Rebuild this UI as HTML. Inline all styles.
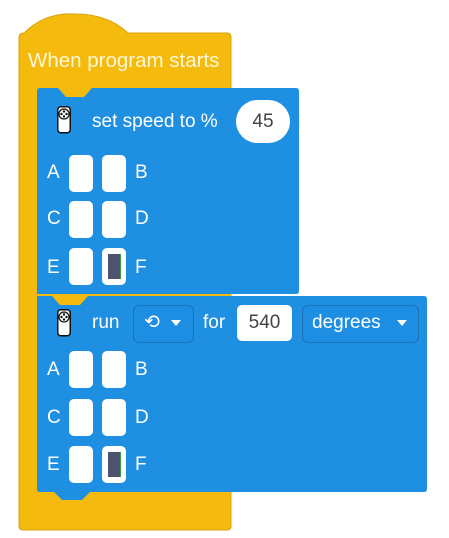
<!DOCTYPE html>
<html><head><style>
body{margin:0;width:449px;height:538px;background:#fff;position:relative;overflow:hidden;font-family:"Liberation Sans",sans-serif}
.a{position:absolute}
.t{position:absolute;color:#fff;font-size:19px;line-height:20px}
.box{position:absolute;width:24px;height:37px;background:#fff;border-radius:5px}
.dk{position:absolute;left:6px;top:6px;width:12px;height:25px;background:#4d5470;border-right:1px solid #3a9a4a}
.dd{position:absolute;border:1px solid #1a72b8;border-radius:6px;background:#1e8ee2}
</style></head><body>
<svg class="a" style="left:0;top:0" width="449" height="538">
<path d="M19 38 Q19 33 24 33 Q45 12 75 14 Q108 14 128 33 L227 33 Q231 33 231 37 L231 526 Q231 530 227 530 L23 530 Q19 530 19 526 Z" fill="#f4bb0e" stroke="#d9a30a" stroke-width="1"/>
<path d="M37 91 Q37 88 40 88 L58 88 L66 97 L84 97 L92 88 L296 88 Q299 88 299 91 L299 291 Q299 294 296 294 L37 294 Z" fill="#1f8fe1"/>
<path d="M37 296 L52 296 L60 305 L80 305 L88 296 L424 296 Q427 296 427 299 L427 489 Q427 492 424 492 L90 492 L82 500 L62 500 L54 492 L40 492 Q37 492 37 489 Z" fill="#1f8fe1"/>
<g id="ic1" transform="translate(57,106)">
<rect x="0.75" y="0.75" width="12.5" height="26" rx="3" fill="#fff" stroke="#111" stroke-width="1.5"/>
<circle cx="7" cy="8" r="5" fill="#fff" stroke="#111" stroke-width="1.2"/>
<circle cx="7" cy="5.5" r="1.2" fill="#111"/><circle cx="7" cy="10.5" r="1.2" fill="#111"/><circle cx="4.5" cy="8" r="1.2" fill="#111"/><circle cx="9.5" cy="8" r="1.2" fill="#111"/>
</g>
<use href="#ic1" transform="translate(0,203)"/>
</svg>
<div class="t" style="left:28px;top:51px;color:#fff6d6;font-size:20.5px">When program starts</div>

<div class="t" style="left:92px;top:112px">set speed to %</div>
<div class="a" style="left:236px;top:100px;width:54px;height:43px;background:#fff;border-radius:22px;font-size:19px;color:#444;text-align:center;line-height:43px">45</div>

<div class="t" style="left:47px;top:163px">A</div><div class="box" style="left:69px;top:155px"></div><div class="box" style="left:102px;top:155px"></div><div class="t" style="left:135px;top:163px">B</div>
<div class="t" style="left:47px;top:209px">C</div><div class="box" style="left:69px;top:201px"></div><div class="box" style="left:102px;top:201px"></div><div class="t" style="left:135px;top:209px">D</div>
<div class="t" style="left:47px;top:258px">E</div><div class="box" style="left:69px;top:248px"></div><div class="box" style="left:102px;top:248px"><div class="dk"></div></div><div class="t" style="left:135px;top:258px">F</div>

<div class="t" style="left:92px;top:313px">run</div>
<div class="dd" style="left:133px;top:305px;width:59px;height:36px"></div>
<div class="t" style="left:144px;top:313px">⟲</div>
<div class="a" style="left:171px;top:320px;width:0;height:0;border-left:5px solid transparent;border-right:5px solid transparent;border-top:6px solid #fff"></div>
<div class="t" style="left:203px;top:313px">for</div>
<div class="a" style="left:237px;top:305px;width:55px;height:36px;background:#fff;border-radius:5px;font-size:19px;color:#444;text-align:center;line-height:36px">540</div>
<div class="dd" style="left:302px;top:305px;width:115px;height:36px"></div>
<div class="t" style="left:312px;top:313px">degrees</div>
<div class="a" style="left:397px;top:320px;width:0;height:0;border-left:5px solid transparent;border-right:5px solid transparent;border-top:6px solid #fff"></div>

<div class="t" style="left:47px;top:360px">A</div><div class="box" style="left:69px;top:351px"></div><div class="box" style="left:102px;top:351px"></div><div class="t" style="left:135px;top:360px">B</div>
<div class="t" style="left:47px;top:408px">C</div><div class="box" style="left:69px;top:399px"></div><div class="box" style="left:102px;top:399px"></div><div class="t" style="left:135px;top:408px">D</div>
<div class="t" style="left:47px;top:455px">E</div><div class="box" style="left:69px;top:446px"></div><div class="box" style="left:102px;top:446px"><div class="dk"></div></div><div class="t" style="left:135px;top:455px">F</div>
</body></html>
